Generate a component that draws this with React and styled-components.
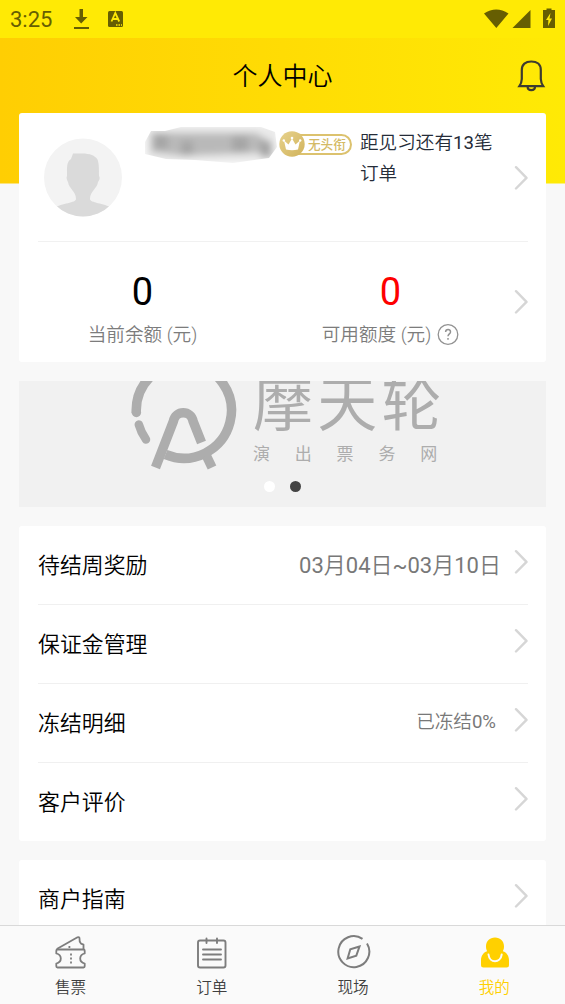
import React from "react";
import styled, { createGlobalStyle } from "styled-components";

const GlobalStyle = createGlobalStyle`
  * {
    box-sizing: border-box;
  }
  body {
    margin: 0;
    background: #f8f8f8;
    font-family: Roboto, "Noto Sans CJK SC", sans-serif;
    font-weight: 350;
    color: #000;
  }
`;

const Page = styled.div`
  height: 1004px;
  display: flex;
  flex-direction: column;
  overflow: hidden;
`;

const StatusBar = styled.div`
  flex: none;
  height: 38px;
  padding: 0 9px 0 10px;
  display: flex;
  align-items: center;
  background: #ffea05;
  color: #665e02;

  svg {
    display: block;
  }
`;

const Clock = styled.span`
  width: 64px;
  font-size: 22px;
  line-height: 38px;
  padding-top: 2px;
  font-weight: 400;
`;

const StatusRight = styled.div`
  margin-left: auto;
  display: flex;
  align-items: center;
`;

const Content = styled.main`
  flex: 1;
  min-height: 0;
  overflow: hidden;
  padding: 0 19px;
  background: linear-gradient(90deg, #ffce03, #ffea05) no-repeat 0 0 / 100% 145.5px;
`;

const Header = styled.header`
  height: 75px;
  display: grid;
  grid-template-columns: 40px 1fr 40px;
  align-items: center;

  svg {
    display: block;
    justify-self: end;
  }
`;

const Title = styled.h1`
  grid-column: 2;
  margin: 0;
  padding-top: 2px;
  text-align: center;
  font-size: 25px;
  line-height: 38px;
  font-weight: 350;
`;

const Card = styled.section`
  margin-bottom: 19px;
  padding: 0 18px 0 19px;
  background: #fff;
  border-radius: 3px;
`;

const Profile = styled.div`
  height: 129px;
  padding: 14px 0 0 6px;
  display: flex;
  align-items: flex-start;
  border-bottom: 1px solid #f1f1f1;
`;

const Avatar = styled.svg`
  margin-top: 11px;
  margin-right: 22px;
  flex: none;
`;

const HiddenName = styled.svg`
  flex: none;
  margin-top: -3px;
  margin-right: 1px;
`;

const Rank = styled.div`
  flex: none;
  width: 74px;
  height: 26px;
  margin: 4px 7px 0 0;
  display: flex;
  align-items: center;
`;

const RankLabel = styled.span`
  width: 59px;
  height: 21px;
  margin-left: -12px;
  padding-left: 13px;
  border: 2px solid #dcc26e;
  border-radius: 0 11px 11px 0;
  color: #d4ba65;
  font-size: 12.6px;
  line-height: 18px;
  font-weight: 500;
  white-space: nowrap;
`;

const RankIcon = styled.svg`
  position: relative;
  z-index: 1;
  flex: none;
`;

const Progress = styled.p`
  width: 140px;
  margin: 1px 0 0;
  color: #252c38;
  font-size: 18.6px;
  line-height: 31px;
`;

const Digits = styled.span`
  font-weight: 400;
`;

const Arrow = styled.svg`
  flex: none;
  display: block;
  margin-left: auto;
  margin-top: ${({ $top }) => $top || 0}px;
`;

const Balances = styled.div`
  height: 120px;
  display: grid;
  grid-template-columns: 209px 1fr 14px;
`;

const Balance = styled.div`
  padding: 27px 0 0 ${({ $inset }) => $inset || 0}px;
  text-align: center;
`;

const Amount = styled.div`
  color: ${({ $color }) => $color};
  font-size: 38px;
  font-weight: 400;
  line-height: 46px;
`;

const Caption = styled.div`
  display: flex;
  justify-content: center;
  align-items: center;
  gap: 6px;
  margin-top: 6px;
  color: #7c7c7c;
  font-size: 18.6px;
  line-height: 28px;
`;

const Banner = styled.section`
  height: 126px;
  margin-bottom: 19px;
  padding-left: 110px;
  display: grid;
  grid-template-columns: 124px 1fr;
  grid-template-rows: 95px 1fr;
  overflow: hidden;
  background: #f1f1f1;
  color: #adadad;
`;

const BrandText = styled.div`
  margin-top: -10px;
  white-space: nowrap;
  font-weight: 400;
`;

const BrandName = styled.div`
  font-size: 60px;
  line-height: 70px;
  letter-spacing: 4.3px;
`;

const BrandSub = styled.div`
  margin-top: 1px;
  font-size: 17px;
  line-height: 24px;
  letter-spacing: 24.8px;
`;

const Dots = styled.div`
  grid-column: 1 / 3;
  display: flex;
  gap: 15px;
  padding: 5px 0 0 135px;
`;

const Dot = styled.i`
  width: 11px;
  height: 11px;
  border-radius: 50%;
  background: ${({ $active }) => ($active ? "#444" : "#fff")};
`;

const Row = styled.div`
  height: 79px;
  display: flex;
  border-bottom: 1px solid #f0f0f0;

  &:last-child {
    height: 78px;
    border-bottom: 0;
  }
`;

const RowLabel = styled.span`
  font-size: 21.9px;
  line-height: 80px;
`;

const RowValue = styled.span`
  margin-left: auto;
  margin-right: ${({ $small }) => ($small ? 18 : 13)}px;
  color: #787878;
  font-size: ${({ $small }) => ($small ? 18.6 : 22)}px;
  line-height: ${({ $small }) => ($small ? 76 : 79)}px;

  & + svg {
    margin-left: 0;
  }
`;

const TabBar = styled.nav`
  flex: none;
  height: 79px;
  display: grid;
  grid-template-columns: repeat(4, 1fr);
  border-top: 1px solid #d9d9d9;
  background: #fafafa;
`;

const Tab = styled.a`
  display: flex;
  flex-direction: column;
  align-items: center;
  padding-top: 9px;
  color: ${({ $active }) => ($active ? "#ffd000" : "#3f3f3f")};
  font-size: 15.6px;
  line-height: 24px;

  svg {
    display: block;
    margin-bottom: 5px;
    margin-left: 1px;
  }
`;

// numbers are set a little heavier than the characters round them
const withDigits = (text) =>
  text.split(/([\d~%]+)/).map((part, i) => (i % 2 ? <Digits key={i}>{part}</Digits> : part));

const Chevron = ({ top }) => (
  <Arrow $top={top} width="14" height="26" viewBox="0 0 14 26" fill="none" stroke="#d6d6d6" strokeWidth="2.4">
    <path d="M2 2.200 12.500 12.900 2 23.500" strokeLinecap="round" strokeLinejoin="round" />
  </Arrow>
);

const rows = [
  { label: "待结周奖励", value: "03月04日~03月10日" },
  { label: "保证金管理" },
  { label: "冻结明细", value: "已冻结0%", small: true },
  { label: "客户评价" },
];

const TicketIcon = () => (
  <svg width="36" height="36" viewBox="0 0 36 36" fill="none" stroke="#7d7d7d" strokeWidth="1.8" strokeLinejoin="round">
    <path d="M4.500 14.500h26q1.200 0 1.200 1.200v2.800c-6 1.500-6 8.500 0 10v2.800q0 1.200-1.200 1.200h-26q-1.200 0-1.200-1.200v-2.800c6-1.500 6-8.500 0-10v-2.800q0-1.200 1.200-1.200z" />
    <path d="M3.800 14 24.500 2.300q2-.8 2 1.200-.3 3.500 1.500 5.200l2.500 1v4.800" />
    <path d="M18 18.500v10M16.400 11v2" strokeDasharray="2 2" />
  </svg>
);

const OrderIcon = () => (
  <svg width="36" height="36" viewBox="0 0 36 36" fill="none" stroke="#7d7d7d" strokeWidth="1.9" strokeLinecap="round">
    <rect x="4" y="5.500" width="27.500" height="27" rx="2" />
    <path d="M12.500 3.500v4.500M23 3.500v4.500M9 14.500h18M9 19.500h18M9 24.500h18" />
  </svg>
);

const CompassIcon = () => (
  <svg width="36" height="36" viewBox="0 0 36 36" fill="none" stroke="#7d7d7d" strokeWidth="2">
    <path d="M31 8.500A15.500 15.500 0 1 1 26.500 3.800" />
    <path d="M23.500 11.500 14.300 14.300 11.600 23.500l8.700-2.800z" />
  </svg>
);

const MineIcon = () => (
  <svg width="36" height="36" viewBox="0 0 36 36">
    <path
      d="M18 2.500c5.300 0 9 3.800 9 8.700 0 2-.4 3.500-1.100 5C29.800 17.500 32 21 32 25v5q0 2.500-2.500 2.500h-23Q4 32.500 4 30v-5c0-4 2.200-7.500 6.100-8.800-.7-1.500-1.100-3-1.100-5 0-4.900 3.700-8.700 9-8.700z"
      fill="#ffd000"
    />
    <path d="M11.500 19.500c1 9 12 9 13.200 0" fill="none" stroke="#fafafa" strokeWidth="2" strokeLinecap="round" />
  </svg>
);

const tabs = [
  { label: "售票", Icon: TicketIcon },
  { label: "订单", Icon: OrderIcon },
  { label: "现场", Icon: CompassIcon },
  { label: "我的", Icon: MineIcon, active: true },
];

const Status = () => (
  <StatusBar>
    <Clock>3:25</Clock>
    <svg width="50" height="24" viewBox="0 0 50 24" fill="currentColor">
      <path d="M5.500 2h3.500v8h4.500l-6.300 6.500L1 10h4.500zM0 20h15v1.900H0z" />
      <rect x="34" y="4" width="15" height="16" rx="1.500" />
      <path d="m37.500 14.500 3.800-8.500L45.200 14.500M38.800 12h5" fill="none" stroke="#ffea05" strokeWidth="1.800" />
      <path d="M42 18h1.500M44.500 18h1.500M47 18h1" stroke="#ffea05" strokeWidth="1.500" />
    </svg>
    <StatusRight>
      <svg width="72" height="24" viewBox="0 0 72 24" fill="currentColor">
        <path d="M0 6.500Q12.200-1.500 24.500 6.500L12.300 21zM28.500 21 46.500 3v18z" />
        <path d="M59 3h3.500V1.500h5V3h3.500v18H59z" />
        <path d="m66.500 6-4.500 7h2.400l-.4 6 4-7.500h-2.500z" fill="#ffea05" />
      </svg>
    </StatusRight>
  </StatusBar>
);

const Logo = () => (
  <svg width="110" height="95" viewBox="0 0 110 95" fill="none" stroke="#adadad" strokeLinecap="round">
    <path d="M7.300 32A47.600 47.600 0 1 1 36.500 73.500" strokeWidth="9.500" strokeLinecap="butt" />
    <circle cx="7.400" cy="31.500" r="4.700" fill="#adadad" stroke="none" />
    <path d="M9.800 43.500Q12 51.500 17 58.500" strokeWidth="8.500" />
    <path d="M26.500 86.500 44.500 40a9.900 9.900 0 0 1 19.500 0L72.500 61.500" strokeWidth="9.500" strokeLinecap="butt" strokeLinejoin="round" />
    <path d="m77.500 75 5.500 11.500" strokeWidth="9.500" strokeLinecap="butt" />
  </svg>
);

const App = () => {
  return (
    <>
      <GlobalStyle />
      <Page>
        <Status />
        <Content>
          <Header>
            <Title>个人中心</Title>
            <svg width="32" height="36" viewBox="0 0 32 36" fill="none" stroke="#3d3b30" strokeWidth="2.200">
              <path d="M7.800 12C7.800 6.500 11.500 3.500 17.300 3.500S26.800 6.500 26.800 12v9q.2 4 2.400 7.200H5.400Q7.600 25 7.800 21z" />
              <path d="M13.600 28.500q0 3.600 3.700 3.600t3.700-3.600" />
            </svg>
          </Header>

          <Card>
            <Profile>
              <Avatar width="79" height="79" viewBox="0 0 79 79">
                <clipPath id="avatar">
                  <circle cx="39" cy="39.500" r="39" />
                </clipPath>
                <g clipPath="url(#avatar)">
                  <path d="M0 0h79v79H0z" fill="#f3f3f3" />
                  <path
                    d="M29 15.500h9c8 0 13 2 15.500 6 1.500 4 1.500 9 1.500 16.500 1.500 2 0 5-1 6-1 7-8 9-8 17 0 4 14 4 22 9v11H10V70c8-5 22-5 22-9 0-8-7-10-8-17-1-2-2-4-1-6 0-9-.5-14 4-17z"
                    fill="#dadada"
                  />
                </g>
              </Avatar>
              <HiddenName width="133" height="42" viewBox="0 0 133 42">
                <defs>
                  <clipPath id="smear">
                    <path d="M0 18 6 7h14l16-4h80l14 5 2 15-8 11-36 5-38-3-29-1L0 30z" />
                  </clipPath>
                  <filter id="soft" x="-20%" y="-50%" width="140%" height="200%">
                    <feGaussianBlur stdDeviation="3.500" />
                  </filter>
                </defs>
                <g clipPath="url(#smear)">
                  <g filter="url(#soft)">
                    <path d="M0 1h133v38H0z" fill="#e9e9e9" />
                    <path d="M6 9h105l16 10v14l-14-4-30 1-45 2-32-4z" fill="#b9b9b9" />
                    <path d="M9 10h14v15H9zM36 17h12v14H36zM87 12h16v16H87zM114 17h12v16h-10z" fill="#a6a6a6" />
                  </g>
                </g>
              </HiddenName>
              <Rank>
                <RankIcon width="26" height="26" viewBox="0 0 26 26">
                  <defs>
                    <linearGradient id="gold" x1="0" y1="0" x2="1" y2="1">
                      <stop offset="0" stopColor="#e7d28d" />
                      <stop offset="1" stopColor="#d1b35b" />
                    </linearGradient>
                  </defs>
                  <circle cx="13" cy="13" r="12.700" fill="url(#gold)" />
                  <path d="m5 9.500 4.500 4L13 7.500l3.500 6 4.500-4-2 9q-6 1.500-12 0z" fill="#fff" />
                  <g fill="#fff">
                    <circle cx="4.800" cy="9.500" r="1.200" />
                    <circle cx="13" cy="7" r="1.300" />
                    <circle cx="21.200" cy="9.500" r="1.200" />
                  </g>
                </RankIcon>
                <RankLabel>无头衔</RankLabel>
              </Rank>
              <Progress>{withDigits("距见习还有13笔订单")}</Progress>
              <Chevron top={38} />
            </Profile>
            <Balances>
              <Balance>
                <Amount $color="#000">0</Amount>
                <Caption>当前余额 (元)</Caption>
              </Balance>
              <Balance $inset={20}>
                <Amount $color="#fe0000">0</Amount>
                <Caption>
                  可用额度 (元)
                  <svg width="22" height="22" viewBox="0 0 22 22" fill="none" stroke="#929292" strokeWidth="1.300">
                    <circle cx="11" cy="10.500" r="9.800" />
                    <path d="M8.600 8c.1-3.400 5-3.200 4.900-.1 0 2-2.500 2-2.500 4.400M11 14v1.700" strokeWidth="1.500" />
                  </svg>
                </Caption>
              </Balance>
              <Chevron top={47} />
            </Balances>
          </Card>

          <Banner>
            <Logo />
            <BrandText>
              <BrandName>摩天轮</BrandName>
              <BrandSub>演出票务网</BrandSub>
            </BrandText>
            <Dots>
              <Dot />
              <Dot $active />
            </Dots>
          </Banner>

          <Card>
            {rows.map(({ label, value, small }) => (
              <Row key={label}>
                <RowLabel>{label}</RowLabel>
                {value && <RowValue $small={small}>{withDigits(value)}</RowValue>}
                <Chevron top={23} />
              </Row>
            ))}
          </Card>

          <Card>
            <Row>
              <RowLabel>商户指南</RowLabel>
              <Chevron top={23} />
            </Row>
          </Card>
        </Content>

        <TabBar>
          {tabs.map(({ label, Icon, active }) => (
            <Tab key={label} $active={active}>
              <Icon />
              {label}
            </Tab>
          ))}
        </TabBar>
      </Page>
    </>
  );
};

export default App;
